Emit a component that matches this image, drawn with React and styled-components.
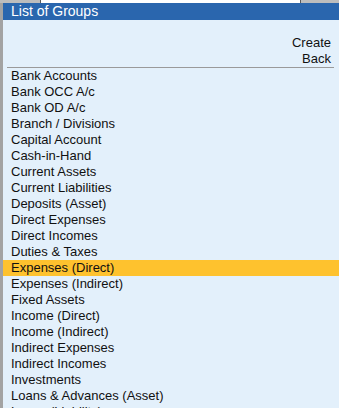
import React from "react"
import styled, { createGlobalStyle } from "styled-components"

const GlobalStyle = createGlobalStyle`
    html, body {
        margin: 0;
        padding: 0;
        overflow: hidden;
        background: #e3f0fb;
    }
    body {
        font-family: "Liberation Sans", Arial, sans-serif;
    }
`;

const TopStrip = styled.div`
    display: flex;
    height: 3px;
    background-color: #bdbdbd;
`;

const StripSegment = styled.div`
    width: ${props => props.width}px;
    background-color: ${props => props.white ? "#ffffff" : "#bdbdbd"};
    border-left: ${props => props.white ? "1px solid #5a5a5a" : "none"};
    border-right: ${props => props.white ? "1px solid #5a5a5a" : "none"};
`;

const Window = styled.div`
    border-left: 3px solid #a3a3a3;
    background-color: #e3f0fb;
    height: 405px;
    overflow: hidden;
`;

const Header = styled.div`
    height: 17px;
    line-height: 17px;
    background-color: #2a66ae;
    color: #ffffff;
    font-size: 14px;
    padding-left: 8px;
`;

const ButtonArea = styled.div`
    display: flex;
    flex-direction: column;
    align-items: flex-end;
    padding-top: 15px;
    padding-right: 8px;
`;

const ActionLabel = styled.div`
    height: 16px;
    line-height: 16px;
    font-size: 13px;
    color: #111111;
`;

const Separator = styled.div`
    height: 1px;
    background-color: #9a9a9a;
    margin: 0 5px 0 4px;
`;

const List = styled.div`
    display: flex;
    flex-direction: column;
`;

const Row = styled.div`
    height: 16px;
    line-height: 16px;
    font-size: 13px;
    padding-left: 8px;
    color: #111111;
    white-space: nowrap;
    background-color: ${props => props.selected ? "#fec22e" : "transparent"};
`;

const groups = [
    "Bank Accounts",
    "Bank OCC A/c",
    "Bank OD A/c",
    "Branch / Divisions",
    "Capital Account",
    "Cash-in-Hand",
    "Current Assets",
    "Current Liabilities",
    "Deposits (Asset)",
    "Direct Expenses",
    "Direct Incomes",
    "Duties & Taxes",
    "Expenses (Direct)",
    "Expenses (Indirect)",
    "Fixed Assets",
    "Income (Direct)",
    "Income (Indirect)",
    "Indirect Expenses",
    "Indirect Incomes",
    "Investments",
    "Loans & Advances (Asset)",
    "Loans (Liability)",
    "Misc. Expenses (ASSET)",
    "Provisions",
]

function App() {
    return (
        <>
            <GlobalStyle />
            <TopStrip>
                <StripSegment width={40} />
                <StripSegment width={259} white />
                <StripSegment width={38} />
            </TopStrip>
            <Window>
                <Header>List of Groups</Header>
                <ButtonArea>
                    <ActionLabel>Create</ActionLabel>
                    <ActionLabel>Back</ActionLabel>
                </ButtonArea>
                <Separator />
                <List>
                    {groups.map(name => (
                        <Row key={name} selected={name === "Expenses (Direct)"}>{name}</Row>
                    ))}
                </List>
            </Window>
        </>
    )
}

export default App
